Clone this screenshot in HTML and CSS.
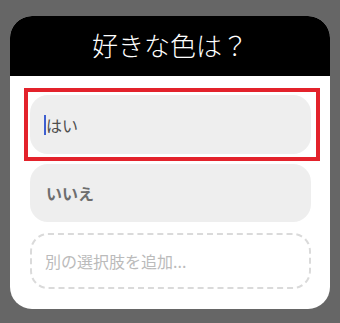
FILE: index.html
```html
<!DOCTYPE html>
<html lang="ja">
<head>
<meta charset="utf-8">
<link rel="stylesheet" href="styles.css">
</head>
<body>
<div class="card">
  <div class="header">好きな色は？</div>
  <div class="content">
    <div class="option option-first"><span class="cursor"></span><span class="label">はい</span></div>
    <div class="option option-second"><span class="label bold">いいえ</span></div>
    <div class="option-add">別の選択肢を追加...</div>
    <div class="highlight"></div>
  </div>
</div>
</body>
</html>
```
FILE: styles.css
```css
html, body {
  margin: 0;
  padding: 0;
  background: #666666;
}
body {
  width: 340px;
  height: 323px;
  overflow: hidden;
  font-family: "Noto Sans CJK JP", "Noto Sans", sans-serif;
}
.card {
  margin: 16px 10px 0;
  width: 320px;
  background: #ffffff;
  border-radius: 22px;
  overflow: hidden;
}
.header {
  height: 60px;
  background: #000000;
  color: #ffffff;
  font-size: 26px;
  font-weight: 300;
  display: flex;
  align-items: center;
  justify-content: center;
  line-height: 1;
  padding-bottom: 2px;
  box-sizing: border-box;
}
.content {
  position: relative;
  padding: 19px 19px 20px 20px;
  display: flex;
  flex-direction: column;
  gap: 10px;
}
.option {
  background: #eeeeee;
  border-radius: 18px;
  display: flex;
  align-items: center;
  padding-left: 14px;
  font-size: 16px;
  color: #4f4f4f;
}
.option-first { height: 59px; }
.option-second { height: 58px; padding-left: 16px; }
.cursor {
  width: 2px;
  height: 20px;
  background: #3f5fd0;
}
.label { line-height: 1; }
.bold { font-weight: 700; color: #6e6e6e; }
.option-add {
  height: 56px;
  margin-top: 1px;
  box-sizing: border-box;
  border: 2px dashed #dadada;
  border-radius: 18px;
  display: flex;
  align-items: center;
  padding-left: 13px;
  font-size: 16px;
  color: #bbbbbb;
}
.highlight {
  position: absolute;
  left: 14px;
  top: 12px;
  width: 296px;
  height: 73px;
  box-sizing: border-box;
  border: 4px solid #e3222b;
}
```
